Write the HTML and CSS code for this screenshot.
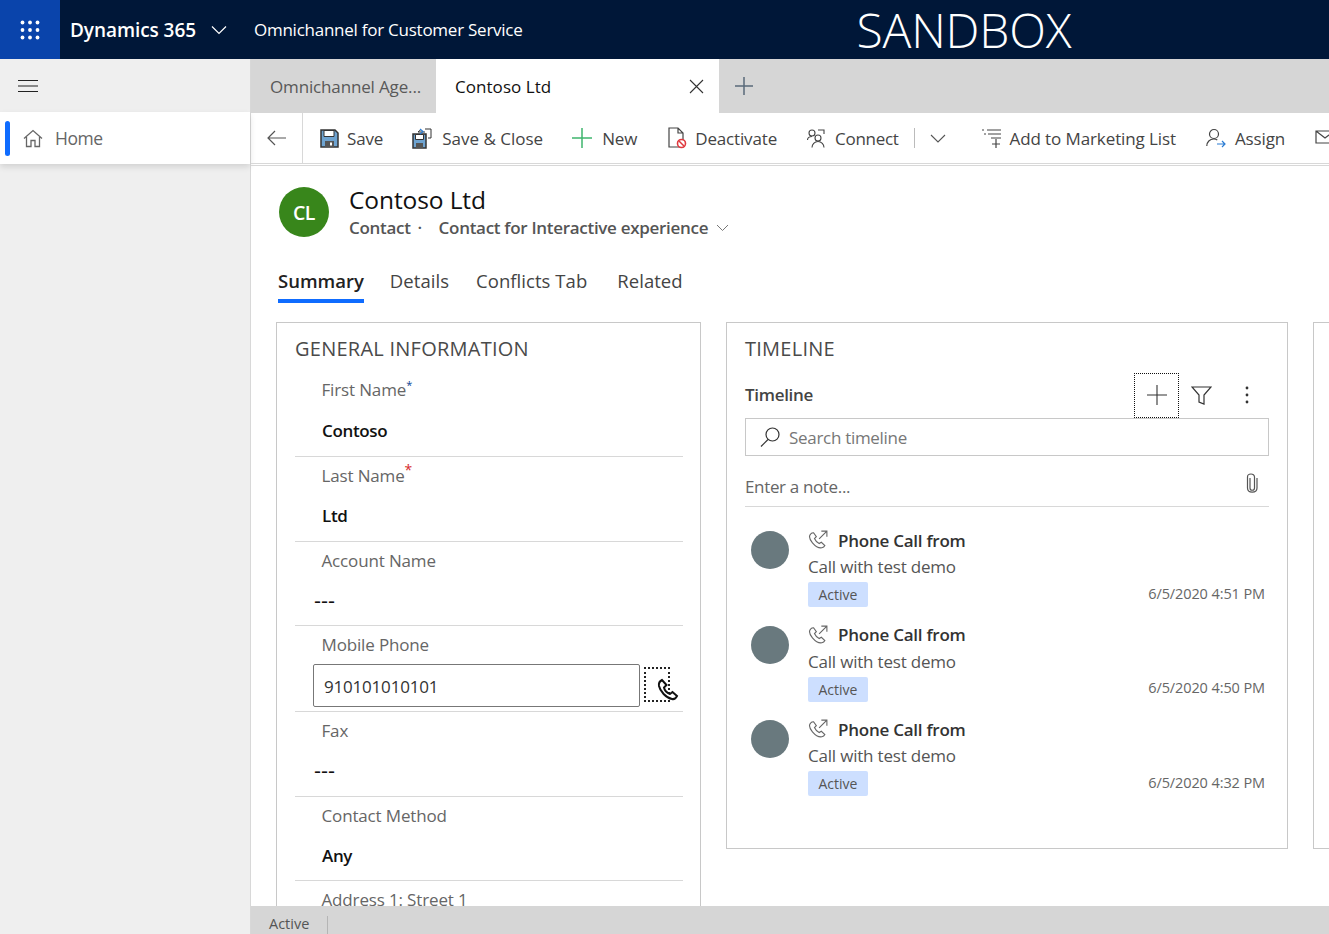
FILE: index.html
```html
<!DOCTYPE html>
<html>
<head>
    <title>Contoso Ltd</title>
    <link rel="stylesheet" href="styles.css">
</head>
<body>
    <header class="topbar">
        <div class="waffle">
            <svg width="20" height="20" viewBox="0 0 20 20" fill="#fff">
                <circle cx="2.5" cy="2.5" r="1.9"/><circle cx="10" cy="2.5" r="1.9"/><circle cx="17.5" cy="2.5" r="1.9"/>
                <circle cx="2.5" cy="10" r="1.9"/><circle cx="10" cy="10" r="1.9"/><circle cx="17.5" cy="10" r="1.9"/>
                <circle cx="2.5" cy="17.5" r="1.9"/><circle cx="10" cy="17.5" r="1.9"/><circle cx="17.5" cy="17.5" r="1.9"/>
            </svg>
        </div>
        <div class="brand">Dynamics 365</div>
        <svg class="brand-chevron" width="16" height="10" viewBox="0 0 16 10" fill="none" stroke="#fff" stroke-width="1.2"><path d="M1 1.5l7 7 7-7"/></svg>
        <div class="app-name">Omnichannel for Customer Service</div>
        <div class="sandbox">SANDBOX</div>
    </header>

    <div class="shell">
        <nav class="sidebar">
            <div class="hamburger">
                <svg width="20" height="14" viewBox="0 0 20 14" stroke="#222" stroke-width="1.2"><path d="M0 1.5h20M0 7h20M0 12.5h20"/></svg>
            </div>
            <div class="nav-item">
                <span class="nav-marker"></span>
                <svg class="nav-icon" width="20" height="19" viewBox="0 0 20 19" fill="none" stroke="#666" stroke-width="1.3"><path d="M1 9.5L10 1.5l9 8M3.5 8v9.5h4.5v-6h4v6h4.500V8"/></svg>
                <span>Home</span>
            </div>
        </nav>

        <main class="workspace">
            <div class="session-tabs">
                <div class="session-tab">Omnichannel Age...</div>
                <div class="session-tab current">
                    <span>Contoso Ltd</span>
                    <svg width="15" height="15" viewBox="0 0 15 15" stroke="#333" stroke-width="1.1"><path d="M1 1l13 13M14 1L1 14"/></svg>
                </div>
                <svg class="session-add" width="20" height="20" viewBox="0 0 20 20" stroke="#5a6a7a" stroke-width="1.5"><path d="M10 1v18M1 10h18"/></svg>
            </div>

            <div class="commands">
                <div class="back">
                    <svg width="20" height="16" viewBox="0 0 20 16" fill="none" stroke="#555" stroke-width="1.2"><path d="M8 1L1 8l7 7M1 8h18"/></svg>
                </div>
                <div class="cmd save">
                    <svg width="19" height="19" viewBox="0 0 19 19"><path d="M1 1h14l3 3v14H1z" fill="#6ea3d0" stroke="#333" stroke-width="1.500"/><path d="M4 1.500h10v6H4z" fill="#fff" stroke="#333"/><path d="M5 12h9v6H5z" fill="#555"/><path d="M10 13.500h2v3h-2z" fill="#fff"/></svg>
                    <span>Save</span>
                </div>
                <div class="cmd save-close">
                    <svg width="20" height="21" viewBox="0 0 20 21"><path d="M1 6h13v14H1z" fill="#6ea3d0" stroke="#333" stroke-width="1.500"/><path d="M3.500 6.500h8v5h-8z" fill="#fff" stroke="#333"/><path d="M4 15h7v5H4z" fill="#555"/><path d="M13 1h6v9h-3M6 4l3-2.500M6 4h7" fill="none" stroke="#333"/><path d="M8 1l3 2.500-3 2.500" fill="none" stroke="#2b7cd3" stroke-width="1.200"/></svg>
                    <span>Save &amp; Close</span>
                </div>
                <div class="cmd new">
                    <svg width="20" height="20" viewBox="0 0 20 20" stroke="#3fb56e" stroke-width="1.500"><path d="M10 0v20M0 10h20"/></svg>
                    <span>New</span>
                </div>
                <div class="cmd deactivate">
                    <svg width="20" height="22" viewBox="0 0 20 22"><path d="M2 1h9l5 5v14H2z M11 1v5h5" fill="none" stroke="#444" stroke-width="1.200"/><circle cx="14.500" cy="16.500" r="4" fill="#fff" stroke="#e0393e" stroke-width="1.600"/><path d="M12 14l5 5" stroke="#e0393e" stroke-width="1.500"/></svg>
                    <span>Deactivate</span>
                </div>
                <div class="cmd connect">
                    <svg width="18" height="19" viewBox="0 0 18 19" fill="none" stroke="#444" stroke-width="1.100"><circle cx="5" cy="4" r="3"/><path d="M0.500 11c0-2 2-3.500 4.500-3.500"/><circle cx="11" cy="9" r="3"/><path d="M5 18.500c0-3 2.500-6 6-6s6 3 6 6M11 1h6v4"/></svg>
                    <span>Connect</span>
                </div>
                <span class="cmd-sep"></span>
                <svg class="cmd-chevron" width="16" height="9" viewBox="0 0 16 9" fill="none" stroke="#555" stroke-width="1.100"><path d="M1 1l7 7 7-7"/></svg>
                <div class="cmd marketing">
                    <svg width="20" height="20" viewBox="0 0 20 20" stroke="#444" stroke-width="1.200"><path d="M0 2h2M5 2h14M2 6h2M6 6h13M9 10h10M14 11v9M10 16h8"/></svg>
                    <span>Add to Marketing List</span>
                </div>
                <div class="cmd assign">
                    <svg width="20" height="20" viewBox="0 0 20 20" fill="none"><circle cx="8" cy="6" r="4.500" stroke="#444" stroke-width="1.200"/><path d="M0.800 18c0-4 3-7 7-7 1.500 0 2.500.3 3.500 1" stroke="#444" stroke-width="1.200"/><path d="M11 16h8M16 13l3 3-3 3" stroke="#2b7cd3" stroke-width="1.200"/></svg>
                    <span>Assign</span>
                </div>
                <div class="cmd email">
                    <svg width="20" height="18" viewBox="0 0 20 18" fill="none" stroke="#444" stroke-width="1.200"><path d="M1 2h18v12H1zM1 2l9 7 9-7"/></svg>
                </div>
            </div>

            <div class="record">
                <div class="record-head">
                    <div class="avatar">CL</div>
                    <div>
                        <div class="record-title">Contoso Ltd</div>
                        <div class="record-sub">
                            <span>Contact</span><span class="dot">·</span><span>Contact for Interactive experience</span>
                            <svg width="13" height="8" viewBox="0 0 13 8" fill="none" stroke="#777" stroke-width="1"><path d="M1 1l5.500 5.500L12 1"/></svg>
                        </div>
                    </div>
                </div>

                <div class="form-tabs">
                    <div class="form-tab active">Summary</div>
                    <div class="form-tab">Details</div>
                    <div class="form-tab">Conflicts Tab</div>
                    <div class="form-tab last">Related</div>
                </div>

                <div class="columns">
                    <section class="card general">
                        <h2>GENERAL INFORMATION</h2>
                        <div class="field first">
                            <div class="field-label">First Name<sup class="req-blue">*</sup></div>
                            <div class="field-value">Contoso</div>
                        </div>
                        <div class="field">
                            <div class="field-label">Last Name<sup class="req-red">*</sup></div>
                            <div class="field-value">Ltd</div>
                        </div>
                        <div class="field short">
                            <div class="field-label">Account Name</div>
                            <div class="field-value empty">---</div>
                        </div>
                        <div class="field phone">
                            <div class="field-label">Mobile Phone</div>
                            <div class="phone-row">
                                <div class="phone-input">910101010101</div>
                                <div class="phone-btn">
                                    <svg width="24" height="24" viewBox="0 0 24 24" fill="#fff" stroke="#111" stroke-width="2"><path d="M6 2C4 3 2.500 5 3 8c1 5 7 12 13 13 2 .5 4-1 5-3l-4.500-4-2.500 2c-3-1-5.500-4-6-6.500L10.500 7z"/></svg>
                                </div>
                            </div>
                        </div>
                        <div class="field">
                            <div class="field-label">Fax</div>
                            <div class="field-value empty">---</div>
                        </div>
                        <div class="field short">
                            <div class="field-label">Contact Method</div>
                            <div class="field-value">Any</div>
                        </div>
                        <div class="field">
                            <div class="field-label">Address 1: Street 1</div>
                        </div>
                    </section>

                    <section class="card timeline">
                        <h2>TIMELINE</h2>
                        <div class="tl-head">
                            <div class="tl-title">Timeline</div>
                            <div class="tl-tool focused">
                                <svg width="20" height="20" viewBox="0 0 20 20" stroke="#333" stroke-width="1.100"><path d="M10 0v20M0 10h20"/></svg>
                            </div>
                            <div class="tl-tool">
                                <svg width="21" height="19" viewBox="0 0 21 19" fill="none" stroke="#333" stroke-width="1.200"><path d="M1 1h19l-7 8v9l-5-2V9z"/></svg>
                            </div>
                            <div class="tl-tool">
                                <svg width="4" height="18" viewBox="0 0 4 18" fill="#333"><circle cx="2" cy="2" r="1.400"/><circle cx="2" cy="9" r="1.400"/><circle cx="2" cy="16" r="1.400"/></svg>
                            </div>
                        </div>
                        <div class="tl-search">
                            <svg width="20" height="20" viewBox="0 0 20 20" fill="none" stroke="#333" stroke-width="1.200"><circle cx="12.500" cy="7.500" r="6.500"/><path d="M8 12.500L1 19.500"/></svg>
                            <span>Search timeline</span>
                        </div>
                        <div class="tl-note">
                            <span>Enter a note...</span>
                            <svg width="12" height="20" viewBox="0 0 12 20" fill="none" stroke="#555" stroke-width="1.200"><path d="M4 5v10c0 3 4.500 3 4.500 0V4c0-4-7-4-7 0v11c0 5.500 9.500 5.500 9.500 0V5"/></svg>
                        </div>

                        <div class="activity">
                            <div class="activity-avatar"></div>
                            <div class="activity-body">
                                <div class="activity-title">
                                    <svg width="20" height="20" viewBox="0 0 18 18" fill="none" stroke="#666" stroke-width="1"><path d="M2.500 3.500c-2 2-1.500 4.500 1.500 8s6 5 8.500 4.500c1.200-.2 2.200-1 2.700-2l-3.200-3-2 1.200c-1.700-.8-3.300-2.500-4.200-4.500l1.700-1.700-2.500-3.500c-1 0-1.900.300-2.500 1zM10 8l7-7M12 1h5v5"/></svg>
                                    <span>Phone Call from</span>
                                </div>
                                <div class="activity-desc">Call with test demo</div>
                                <div class="activity-foot">
                                    <span class="badge">Active</span>
                                    <span class="stamp">6/5/2020 4:51 PM</span>
                                </div>
                            </div>
                        </div>
                        <div class="activity">
                            <div class="activity-avatar"></div>
                            <div class="activity-body">
                                <div class="activity-title">
                                    <svg width="20" height="20" viewBox="0 0 18 18" fill="none" stroke="#666" stroke-width="1"><path d="M2.500 3.500c-2 2-1.500 4.500 1.500 8s6 5 8.500 4.500c1.200-.2 2.200-1 2.700-2l-3.200-3-2 1.200c-1.700-.8-3.300-2.500-4.200-4.500l1.700-1.700-2.500-3.500c-1 0-1.900.300-2.500 1zM10 8l7-7M12 1h5v5"/></svg>
                                    <span>Phone Call from</span>
                                </div>
                                <div class="activity-desc">Call with test demo</div>
                                <div class="activity-foot">
                                    <span class="badge">Active</span>
                                    <span class="stamp">6/5/2020 4:50 PM</span>
                                </div>
                            </div>
                        </div>
                        <div class="activity">
                            <div class="activity-avatar"></div>
                            <div class="activity-body">
                                <div class="activity-title">
                                    <svg width="20" height="20" viewBox="0 0 18 18" fill="none" stroke="#666" stroke-width="1"><path d="M2.500 3.500c-2 2-1.500 4.500 1.500 8s6 5 8.500 4.500c1.200-.2 2.200-1 2.700-2l-3.200-3-2 1.200c-1.700-.8-3.300-2.500-4.200-4.500l1.700-1.700-2.500-3.500c-1 0-1.900.300-2.500 1zM10 8l7-7M12 1h5v5"/></svg>
                                    <span>Phone Call from</span>
                                </div>
                                <div class="activity-desc">Call with test demo</div>
                                <div class="activity-foot">
                                    <span class="badge">Active</span>
                                    <span class="stamp">6/5/2020 4:32 PM</span>
                                </div>
                            </div>
                        </div>
                    </section>

                    <section class="card stub"></section>
                </div>
            </div>

            <footer class="statusbar">
                <span class="status-text">Active</span>
                <span class="status-sep"></span>
            </footer>
        </main>
    </div>
</body>
</html>
```

FILE: styles.css
```css
* {
    box-sizing: border-box;
}
html, body {
    height: 100%;
}
body {
    margin: 0;
    overflow: hidden;
    font-family: "Open Sans", "Noto Sans", Arial, sans-serif;
    font-size: 17px;
    color: #333;
    background-color: #fff;
}
svg {
    display: block;
    flex-shrink: 0;
}

/* top bar */
.topbar {
    display: flex;
    align-items: center;
    height: 59px;
    background-color: #001738;
    color: #fff;
}
.waffle {
    display: flex;
    align-items: center;
    justify-content: center;
    width: 60px;
    height: 59px;
    background-color: #0a44ab;
}
.brand {
    margin-left: 10px;
    font-size: 19px;
    font-weight: 600;
    letter-spacing: -0.07px;
}
.brand-chevron {
    margin-left: 15px;
}
.app-name {
    margin-left: 27px;
    font-size: 17px;
    letter-spacing: -0.25px;
}
.sandbox {
    margin-left: 334px;
    font-size: 48px;
    font-weight: 300;
    letter-spacing: -0.2px;
    line-height: 48px;
}

.shell {
    display: flex;
    height: 875px;
}

/* sidebar */
.sidebar {
    width: 251px;
    flex-shrink: 0;
    background-color: #efefef;
    border-right: 1px solid #d8d8d8;
}
.hamburger {
    display: flex;
    align-items: center;
    height: 53px;
    padding-left: 18px;
}
.nav-item {
    display: flex;
    align-items: center;
    height: 52px;
    padding-left: 5px;
    background-color: #fff;
    box-shadow: 0 3px 6px rgba(0,0,0,0.12);
    color: #666;
    font-size: 17.5px;
    letter-spacing: -0.5px;
}
.nav-marker {
    width: 5px;
    height: 35px;
    border-radius: 3px;
    background-color: #0f6cff;
}
.nav-icon {
    margin-left: 13px;
    margin-right: 12px;
}

.workspace {
    flex: 1;
    min-width: 0;
    display: flex;
    flex-direction: column;
}

/* session tabs */
.session-tabs {
    display: flex;
    align-items: center;
    height: 54px;
    background-color: #d6d6d6;
    flex-shrink: 0;
}
.session-tab {
    width: 185px;
    padding-left: 19px;
    color: #595959;
    letter-spacing: -0.15px;
}
.session-tab.current {
    display: flex;
    align-items: center;
    justify-content: space-between;
    width: 283px;
    height: 54px;
    padding-right: 15px;
    background-color: #fff;
    color: #111;
    letter-spacing: 0.05px;
}
.session-add {
    margin-left: 15px;
}

/* command bar */
.commands {
    display: flex;
    align-items: center;
    height: 53px;
    flex-shrink: 0;
    overflow: hidden;
    border-bottom: 3px double #d8d8d8;
    color: #444;
    font-size: 17px;
    letter-spacing: -0.15px;
}
.back {
    display: flex;
    align-items: center;
    justify-content: center;
    width: 52px;
    height: 50px;
    border-right: 1px solid #d8d8d8;
    flex-shrink: 0;
}
.cmd {
    display: flex;
    align-items: center;
    gap: 9px;
    flex-shrink: 0;
    white-space: nowrap;
}
.save { margin-left: 17px; gap: 8px; }
.save-close { margin-left: 29px; gap: 10px; letter-spacing: 0; }
.new { margin-left: 29px; gap: 10px; }
.deactivate { margin-left: 30px; gap: 8px; }
.connect { margin-left: 30px; gap: 10px; letter-spacing: -0.3px; }
.cmd-sep {
    width: 1px;
    height: 20px;
    margin-left: 15px;
    background-color: #bbb;
    flex-shrink: 0;
}
.cmd-chevron {
    margin-left: 15px;
}
.marketing { margin-left: 36px; gap: 8px; letter-spacing: -0.1px; }
.assign { margin-left: 30px; }
.email { margin-left: 30px; }

/* record */
.record {
    flex: 1;
    min-height: 0;
    overflow: hidden;
    padding-left: 25px;
}
.record-head {
    display: flex;
    align-items: flex-start;
    padding-top: 20px;
    padding-left: 3px;
}
.avatar {
    display: flex;
    align-items: center;
    justify-content: center;
    width: 50px;
    height: 50px;
    margin-top: 1px;
    margin-right: 20px;
    border-radius: 50%;
    background-color: #38861b;
    color: #fff;
    font-size: 19.5px;
    font-weight: 600;
    letter-spacing: -0.5px;
}
.record-title {
    font-size: 24.5px;
    line-height: 28px;
    color: #111;
    letter-spacing: -0.1px;
}
.record-sub {
    display: flex;
    align-items: center;
    margin-top: 2px;
    color: #555;
    font-size: 17px;
    font-weight: 600;
    letter-spacing: -0.3px;
    line-height: 24px;
}
.dot {
    width: 28px;
    padding-left: 7px;
}
.record-sub svg {
    margin-left: 8px;
}

.form-tabs {
    display: flex;
    margin-top: 26px;
    margin-left: 2px;
    font-size: 18.5px;
    color: #444;
    letter-spacing: 0.05px;
}
.form-tab {
    height: 37px;
    margin-right: 27px;
    line-height: 29px;
}
.form-tab.last {
    margin-left: 3px;
}
.form-tab.active {
    margin-right: 26px;
    border-bottom: 4px solid #0f6cff;
    font-weight: 600;
    color: #222;
    letter-spacing: 0;
}

.columns {
    display: flex;
    align-items: flex-start;
    gap: 25px;
    margin-top: 19px;
}
.card {
    flex-shrink: 0;
    border: 1px solid #c8c8c8;
    padding: 0 18px;
}
.card h2 {
    margin: 0;
    padding-top: 11px;
    height: 44px;
    font-size: 20px;
    font-weight: 400;
    line-height: 30px;
    color: #4a4a4a;
    letter-spacing: 0.25px;
}
.general {
    width: 425px;
    height: 600px;
    padding-right: 17px;
}
.general h2 {
    height: 48px;
}
.timeline {
    width: 562px;
    height: 527px;
}
.stub {
    width: 100px;
    height: 527px;
    border-right: 0;
}

/* form fields */
.field {
    height: 85px;
    padding-top: 2px;
    border-bottom: 1px solid #d8d8d8;
}
.field:last-child {
    border-bottom: 0;
}
.field.first, .field.phone {
    height: 86px;
}
.field.short {
    height: 84px;
}
.field.first .field-value {
    padding-top: 1px;
}
.field-label {
    height: 44px;
    margin-top: -5px;
    padding-left: 26.5px;
    line-height: 44px;
    color: #666;
    letter-spacing: -0.15px;
}
.field-value {
    padding-left: 27px;
    line-height: 36px;
    font-weight: 600;
    color: #111;
    letter-spacing: -0.35px;
}
.field-value.empty {
    padding-left: 19px;
    font-family: "Liberation Sans", Arial, sans-serif;
    font-size: 21px;
    font-weight: 400;
    letter-spacing: 0;
}
.req-blue, .req-red {
    font-size: 11px;
    line-height: 0;
}
.req-blue { color: #0b3f91; }
.req-red { color: #d62c2c; font-size: 14px; }
.phone-row {
    display: flex;
    align-items: center;
    margin-left: 18px;
    margin-top: -3px;
}
.phone-input {
    width: 327px;
    height: 43px;
    padding-left: 10px;
    border: 1px solid #777;
    border-radius: 2px;
    line-height: 43px;
    color: #333;
    letter-spacing: -0.2px;
}
.phone-btn {
    position: relative;
    width: 26px;
    height: 35px;
    margin-left: 4px;
    margin-bottom: 2px;
    border: 2px dotted #222;
}
.phone-btn svg {
    position: absolute;
    right: -12px;
    bottom: -2px;
}

/* timeline */
.tl-head {
    display: flex;
    align-items: center;
    height: 45px;
    margin-top: 6px;
}
.tl-title {
    flex: 1;
    padding-bottom: 2px;
    font-weight: 600;
    color: #444;
    letter-spacing: -0.3px;
}
.tl-tool {
    display: flex;
    align-items: center;
    justify-content: center;
    width: 45px;
    height: 45px;
}
.tl-tool svg {
    margin-bottom: 1px;
}
.tl-tool.focused {
    border: 1px dotted #111;
}
.tl-search {
    display: flex;
    align-items: center;
    gap: 9px;
    height: 38px;
    padding-left: 14px;
    border: 1px solid #c8c8c8;
    color: #777;
    letter-spacing: -0.3px;
}
.tl-note {
    display: flex;
    align-items: center;
    justify-content: space-between;
    height: 51px;
    padding-top: 4px;
    padding-right: 11px;
    border-bottom: 1px solid #d8d8d8;
    color: #666;
    letter-spacing: -0.35px;
}
.tl-note span {
    padding-top: 6px;
}
.activity {
    display: flex;
    height: 94.5px;
    padding-top: 24px;
    padding-left: 6px;
}
.activity-avatar {
    width: 38px;
    height: 38px;
    border-radius: 50%;
    background-color: #69797e;
    flex-shrink: 0;
}
.activity-body {
    flex: 1;
    margin-left: 19px;
    margin-top: -3px;
}
.activity-title {
    display: flex;
    align-items: center;
    gap: 10px;
    height: 24px;
    font-weight: 600;
    color: #333;
    letter-spacing: -0.25px;
}
.activity-desc {
    height: 26px;
    margin-top: 2px;
    line-height: 26px;
    color: #555;
    letter-spacing: -0.2px;
}
.activity-foot {
    display: flex;
    align-items: center;
    justify-content: space-between;
    margin-top: 2px;
    padding-right: 4px;
}
.badge {
    display: block;
    height: 25px;
    padding: 0 10.5px;
    border-radius: 2px;
    background-color: #cddfff;
    font-size: 14px;
    line-height: 25px;
    color: #555;
}
.stamp {
    margin-top: -3px;
    font-size: 14.5px;
    color: #666;
    letter-spacing: -0.1px;
}

/* status bar */
.statusbar {
    display: flex;
    align-items: flex-end;
    height: 28px;
    flex-shrink: 0;
    padding-left: 18px;
    background-color: #d6d6d6;
    color: #555;
    font-size: 14.5px;
}
.status-text {
    line-height: 20px;
}
.status-sep {
    width: 1px;
    height: 18px;
    margin-left: 18px;
    background-color: #b5b5b5;
}
```
